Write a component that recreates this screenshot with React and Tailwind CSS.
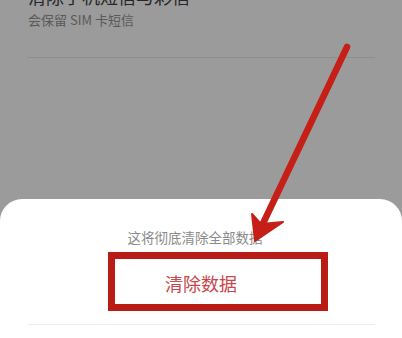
import React from "react";

const font = { fontFamily: '"Noto Sans CJK SC", "Noto Sans", sans-serif' };

export default function App() {
  return (
    <div
      className="relative w-full h-[338px] overflow-hidden bg-[#9b9b9b] flex flex-col"
      style={font}
    >
      {/* dimmed settings list behind the sheet */}
      <div className="px-[28px] mt-[-17px]">
        <div className="text-[18px] leading-[26px] text-[#262626]">清除手机短信与彩信</div>
        <div className="text-[13px] leading-[18px] mt-[2px] text-[#595959]">会保留 SIM 卡短信</div>
      </div>
      <div className="mx-[27px] mt-[28px] h-px bg-[#8e8e8e]" />

      {/* bottom sheet */}
      <div className="mt-auto h-[139px] bg-white rounded-t-[22px] flex flex-col items-center">
        <div className="mt-[29px] mr-[12px] text-[13.5px] leading-[19px] text-[#8a8a8a]">这将彻底清除全部数据</div>
        <div className="mt-[5px] h-[59px] self-stretch flex items-center justify-center">
          <span className="text-[18px] leading-[24px] text-[#c8474d] mt-[2px]">清除数据</span>
        </div>
        <div className="self-stretch mx-[27px] mt-[13px] h-px bg-[#ededed]" />
      </div>

      {/* annotation: red box around the button */}
      <div className="absolute left-[108px] top-[252px] w-[220px] h-[59px] border-[7px] border-[#b91c15] pointer-events-none" />

      {/* annotation arrow */}
      <svg
        className="absolute inset-0 pointer-events-none"
        width="402"
        height="338"
        viewBox="0 0 402 338"
      >
        <line x1="347" y1="47" x2="258" y2="234" stroke="#c51f17" strokeWidth="6.5" strokeLinecap="round" />
        <path d="M255 241 L252 214 L261 224 L283 222 Z" fill="#c51f17" stroke="#c51f17" strokeWidth="2" strokeLinejoin="round" />
      </svg>
    </div>
  );
}
